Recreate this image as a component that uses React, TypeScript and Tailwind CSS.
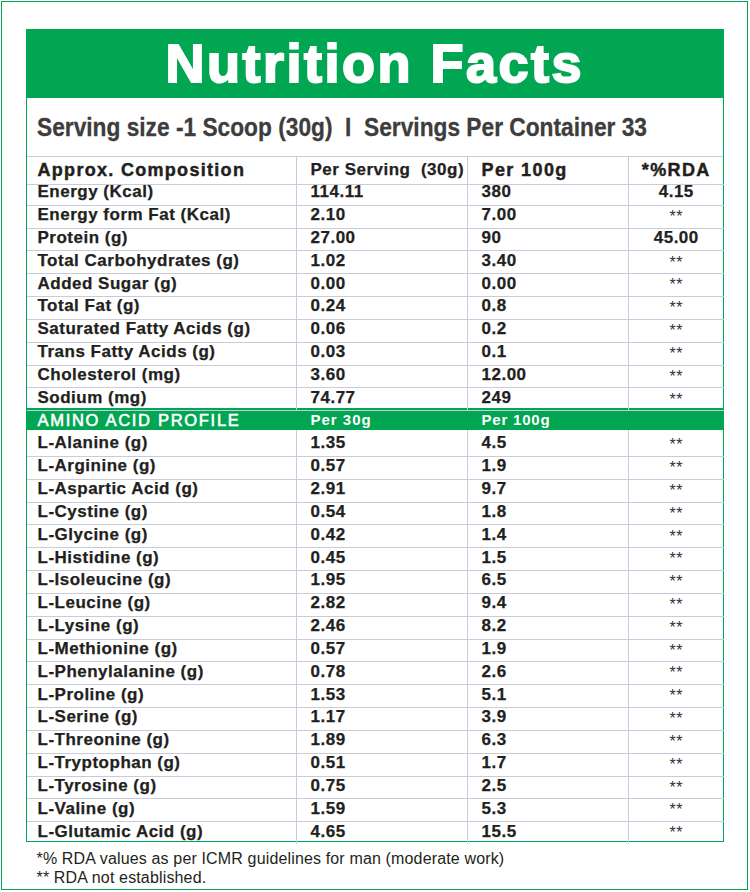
const nutrients: [string, string, string, string][] = [
  ["Energy (Kcal)", "114.11", "380", "4.15"],
  ["Energy form Fat (Kcal)", "2.10", "7.00", "**"],
  ["Protein (g)", "27.00", "90", "45.00"],
  ["Total Carbohydrates (g)", "1.02", "3.40", "**"],
  ["Added Sugar (g)", "0.00", "0.00", "**"],
  ["Total Fat (g)", "0.24", "0.8", "**"],
  ["Saturated Fatty Acids (g)", "0.06", "0.2", "**"],
  ["Trans Fatty Acids (g)", "0.03", "0.1", "**"],
  ["Cholesterol (mg)", "3.60", "12.00", "**"],
  ["Sodium (mg)", "74.77", "249", "**"],
];

const aminoAcids: [string, string, string][] = [
  ["L-Alanine (g)", "1.35", "4.5"],
  ["L-Arginine (g)", "0.57", "1.9"],
  ["L-Aspartic Acid (g)", "2.91", "9.7"],
  ["L-Cystine (g)", "0.54", "1.8"],
  ["L-Glycine (g)", "0.42", "1.4"],
  ["L-Histidine (g)", "0.45", "1.5"],
  ["L-Isoleucine (g)", "1.95", "6.5"],
  ["L-Leucine (g)", "2.82", "9.4"],
  ["L-Lysine (g)", "2.46", "8.2"],
  ["L-Methionine (g)", "0.57", "1.9"],
  ["L-Phenylalanine (g)", "0.78", "2.6"],
  ["L-Proline (g)", "1.53", "5.1"],
  ["L-Serine (g)", "1.17", "3.9"],
  ["L-Threonine (g)", "1.89", "6.3"],
  ["L-Tryptophan (g)", "0.51", "1.7"],
  ["L-Tyrosine (g)", "0.75", "2.5"],
  ["L-Valine (g)", "1.59", "5.3"],
  ["L-Glutamic Acid (g)", "4.65", "15.5"],
];

const rowGrid = "grid grid-cols-[270px_171px_161px_95.5px] h-[22.83px]";
const cell =
  "flex items-center whitespace-nowrap border-b border-[#c9cbdd] text-[17px] font-bold tracking-[0.5px] text-[#231f20] [-webkit-text-stroke:0.25px_#231f20]";
const headCell = "[-webkit-text-stroke:0.45px_#231f20]";

function RdaValue({ value }: { value: string }) {
  if (value === "**") {
    return (
      <span className="translate-y-[2px] text-[16px] font-normal tracking-[0.5px] text-[#333] [-webkit-text-stroke:0px]">
        **
      </span>
    );
  }
  return <span>{value}</span>;
}

function NutrientRow({
  name,
  perServing,
  per100,
  rda,
  last,
}: {
  name: string;
  perServing: string;
  per100: string;
  rda: string;
  last?: boolean;
}) {
  const bottom = last ? "border-b-0" : "";
  return (
    <div className={rowGrid}>
      <div className={`${cell} ${bottom} border-r pl-[11px]`}>{name}</div>
      <div className={`${cell} ${bottom} border-r pl-[14px]`}>{perServing}</div>
      <div className={`${cell} ${bottom} border-r pl-[14px]`}>{per100}</div>
      <div className={`${cell} ${bottom} justify-center`}>
        <RdaValue value={rda} />
      </div>
    </div>
  );
}

export default function App() {
  return (
    <div className="h-[892px] w-[750px] bg-white font-['Liberation_Sans',Arial,sans-serif]">
      <div className="ml-[1px] pt-[1px]">
        <div className="h-[889px] w-[747px] border-[1.5px] border-[#00a651]">
          <div className="ml-[23.5px] mt-[26.5px] w-[698.5px] border-[1.5px] border-t-0 border-[#00a651]">
            <div className="flex h-[69px] items-center justify-center bg-[#00a651]">
              <h1 className="text-[54px] font-bold leading-none tracking-[2.5px] text-white [-webkit-text-stroke:2px_white]">
                Nutrition Facts
              </h1>
            </div>

            <div className="flex h-[59px] items-center overflow-hidden border-b border-[#c9cbdd] pl-[10px]">
              <p className="origin-left scale-x-[0.874] whitespace-nowrap text-[26px] font-bold leading-none text-[#3d3d3d] [-webkit-text-stroke:0.3px_#3d3d3d]">
                Serving size -1 Scoop (30g)&nbsp;&nbsp;I&nbsp;&nbsp;Servings Per Container 33
              </p>
            </div>

            <div className={rowGrid}>
              <div className={`${cell} ${headCell} border-r pl-[11px] text-[18px] tracking-[1.3px]`}>
                Approx. Composition
              </div>
              <div className={`${cell} border-r pl-[14px] text-[16px] tracking-[0.4px]`}>
                Per Serving&nbsp;&nbsp;(30g)
              </div>
              <div className={`${cell} ${headCell} border-r pl-[14px] text-[18px] tracking-[1.4px]`}>Per 100g</div>
              <div className={`${cell} ${headCell} justify-center text-[18px] tracking-[1.4px]`}>*%RDA</div>
            </div>

            {nutrients.map(([name, perServing, per100, rda]) => (
              <NutrientRow key={name} name={name} perServing={perServing} per100={per100} rda={rda} />
            ))}

            <div className={`${rowGrid} bg-[#00a651] text-white`}>
              <div className="flex items-center whitespace-nowrap pl-[11px] text-[16.5px] tracking-[1.7px] [-webkit-text-stroke:0.6px_white]">
                AMINO ACID PROFILE
              </div>
              <div className="flex items-center pl-[14px] text-[15px] font-bold tracking-[1px]">Per 30g</div>
              <div className="flex items-center pl-[14px] text-[15px] font-bold tracking-[0.8px]">Per 100g</div>
              <div />
            </div>

            {aminoAcids.map(([name, per30, per100], i) => (
              <NutrientRow
                key={name}
                name={name}
                perServing={per30}
                per100={per100}
                rda="**"
                last={i === aminoAcids.length - 1}
              />
            ))}
          </div>

          <div className="ml-[34.5px] mt-[7px] text-[16px] leading-[19px] tracking-[0.15px] text-[#231f20]">
            <p>*% RDA values as per ICMR guidelines for man (moderate work)</p>
            <p>** RDA not established.</p>
          </div>
        </div>
      </div>
    </div>
  );
}
